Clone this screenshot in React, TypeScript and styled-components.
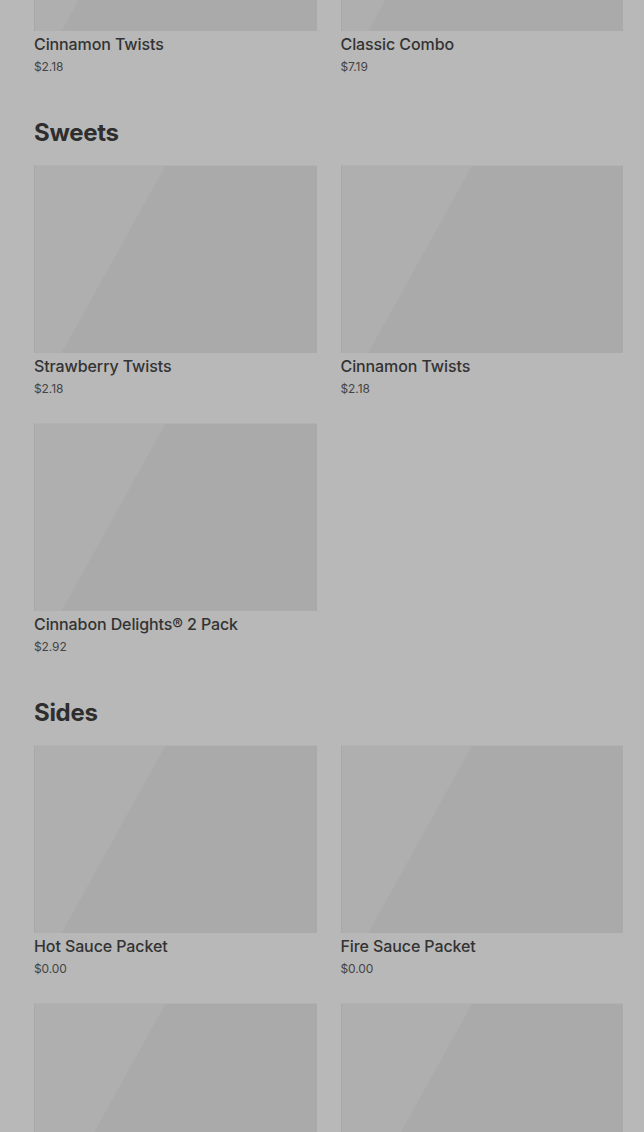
import styled, { createGlobalStyle } from "styled-components"

const GlobalStyle = createGlobalStyle`
  html, body {
    margin: 0;
    padding: 0;
    background: #b8b8b8;
    overflow: hidden;
  }
  * {
    box-sizing: border-box;
  }
`

const Page = styled.div`
  height: 1132px;
  overflow: hidden;
  background: #b8b8b8;
  font-family: Inter, "Noto Sans", sans-serif;
`

// list is scrolled: the first row's pictures sit above the top edge
const Scroller = styled.div`
  display: flex;
  flex-direction: column;
  gap: 40px;
  padding: 0 21px 0 34px;
  margin-top: -157px;
`

const Section = styled.section`
  display: flex;
  flex-direction: column;
  gap: 16px;
`

const SectionTitle = styled.h2`
  margin: 0;
  font-size: 24px;
  line-height: 32px;
  font-weight: 700;
  color: #2e2e2e;
  letter-spacing: -0.3px;
`

const Grid = styled.div`
  display: grid;
  grid-template-columns: 1fr 1fr;
  column-gap: 24px;
  row-gap: 24px;
`

const Card = styled.div`
  display: flex;
  flex-direction: column;
`

const Thumb = styled.div`
  height: 188px;
  background: linear-gradient(
    119deg,
    #afafaf 0%,
    #afafaf 33.5%,
    #aaaaaa 34%,
    #aaaaaa 100%
  );
  border-top: 1px solid #b2b2b2;
  border-left: 1px solid #a8a8a8;
`

const ItemName = styled.p`
  margin: 3px 0 0;
  font-size: 16px;
  line-height: 20px;
  font-weight: 500;
  color: #333333;
  letter-spacing: -0.1px;
`

const Price = styled.p`
  margin: 3px 0 0;
  font-size: 12px;
  line-height: 20px;
  color: #444444;
  letter-spacing: -0.1px;
`

interface IItem {
  name: string
  price: string
}

const sections: { title?: string; items: IItem[] }[] = [
  {
    items: [
      { name: "Cinnamon Twists", price: "$2.18" },
      { name: "Classic Combo", price: "$7.19" },
    ],
  },
  {
    title: "Sweets",
    items: [
      { name: "Strawberry Twists", price: "$2.18" },
      { name: "Cinnamon Twists", price: "$2.18" },
      { name: "Cinnabon Delights® 2 Pack", price: "$2.92" },
    ],
  },
  {
    title: "Sides",
    items: [
      { name: "Hot Sauce Packet", price: "$0.00" },
      { name: "Fire Sauce Packet", price: "$0.00" },
    ],
  },
]

function MenuItem({ name, price }: IItem) {
  return (
    <Card>
      <Thumb />
      <ItemName>{name}</ItemName>
      <Price>{price}</Price>
    </Card>
  )
}

const MoreRow = styled.div`
  display: grid;
  grid-template-columns: 1fr 1fr;
  column-gap: 24px;
  margin-top: -16px;
`

export default function App() {
  return (
    <Page>
      <GlobalStyle />
      <Scroller>
        {sections.map((section, i) => (
          <Section key={i}>
            {section.title && <SectionTitle>{section.title}</SectionTitle>}
            <Grid>
              {section.items.map((item, j) => (
                <MenuItem key={j} {...item} />
              ))}
            </Grid>
          </Section>
        ))}
        <MoreRow>
          <Thumb />
          <Thumb />
        </MoreRow>
      </Scroller>
    </Page>
  )
}
